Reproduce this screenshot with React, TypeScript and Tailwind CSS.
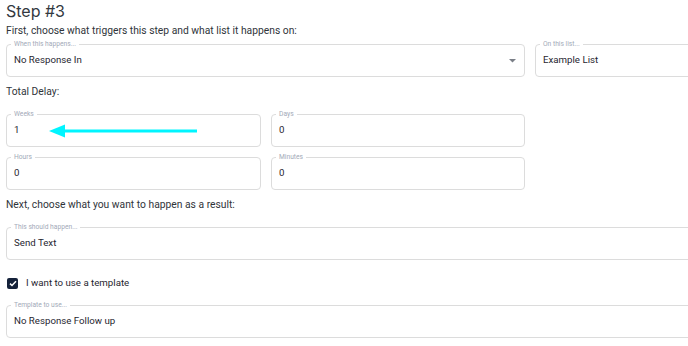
import React from "react";

function Field({
  label,
  value,
  className,
  arrow,
  children,
}: {
  label: string;
  value: string;
  className?: string;
  arrow?: boolean;
  children?: React.ReactNode;
}) {
  return (
    <div
      className={
        "relative h-[33px] rounded-[4px] border border-[#dcdcdc] bg-white flex items-center pl-[7px] " +
        (className ?? "")
      }
    >
      <span className="absolute -top-[5px] left-[4px] bg-white px-[3px] text-[6.7px] leading-[9px] text-[#a3aab8]">
        {label}
      </span>
      <span className="text-[9.7px] text-[#1f2630]">{value}</span>
      {children}
      {arrow && (
        <svg
          className="absolute right-[8px] top-[14px]"
          width="7"
          height="4"
          viewBox="0 0 7 4"
        >
          <path d="M0 0 L7 0 L3.5 3.5 Z" fill="#7a7f87" />
        </svg>
      )}
    </div>
  );
}

export default function App() {
  return (
    <div
      className="w-[688px] h-[346px] overflow-hidden bg-white"
      style={{ fontFamily: "Roboto, 'Noto Sans', sans-serif" }}
    >
      <div className="w-[800px] pl-[6px]">
        <div
          className="text-[16px] leading-[22px] text-[#33393f]"
          style={{ fontFamily: "Inter, sans-serif" }}
        >
          Step #3
        </div>
        <div className="mt-[2px] text-[10.3px] leading-[14px] text-[#2f343a]">
          First, choose what triggers this step and what list it happens on:
        </div>
        <div className="mt-[6px] flex gap-[10px]">
          <Field
            label="When this happens..."
            value="No Response In"
            className="w-[519px]"
            arrow
          />
          <Field label="On this list..." value="Example List" className="w-[240px]" />
        </div>
        <div className="mt-[8px] text-[10.3px] leading-[14px] text-[#2f343a]">
          Total Delay:
        </div>
        <div className="mt-[15px] grid grid-cols-[255px_254px] gap-x-[10px] gap-y-[10px]">
          <Field label="Weeks" value="1">
            <svg
              className="absolute left-[42px] top-[9px]"
              width="148"
              height="14"
              viewBox="0 0 148 14"
            >
              <path d="M0 7 L16 0.5 L16 13.5 Z" fill="#00f5ff" />
              <rect x="14" y="5.5" width="134" height="3" fill="#00f5ff" />
            </svg>
          </Field>
          <Field label="Days" value="0" />
          <Field label="Hours" value="0" />
          <Field label="Minutes" value="0" />
        </div>
        <div className="mt-[8px] text-[10.3px] leading-[14px] text-[#2f343a]">
          Next, choose what you want to happen as a result:
        </div>
        <div className="mt-[15px]">
          <Field label="This should happen..." value="Send Text" className="w-[760px]" />
        </div>
        <div className="mt-[16px] flex items-center gap-[8px] pl-[1px]">
          <div className="w-[11px] h-[11px] rounded-[2px] bg-[#15223a] flex items-center justify-center">
            <svg width="8" height="7" viewBox="0 0 8 7">
              <path
                d="M1 3.6 L3 5.5 L7 1.2"
                stroke="white"
                strokeWidth="1.5"
                fill="none"
              />
            </svg>
          </div>
          <span className="text-[9.7px] leading-[14px] text-[#1f2630]">
            I want to use a template
          </span>
        </div>
        <div className="mt-[15px]">
          <Field
            label="Template to use..."
            value="No Response Follow up"
            className="w-[760px]"
          />
        </div>
      </div>
    </div>
  );
}
